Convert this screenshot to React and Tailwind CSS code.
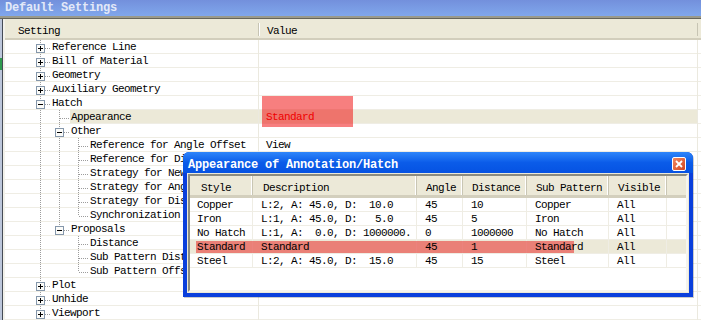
import React from "react";

const MONO = "[font-family:'Liberation_Mono',monospace]";
const T = "text-[11px] tracking-[-0.6px]";
const TB = "text-[12px] tracking-[-0.2px] font-bold";

const rows = [
  { label: "Reference Line", level: 0, box: "plus", anc: [] },
  { label: "Bill of Material", level: 0, box: "plus", anc: [] },
  { label: "Geometry", level: 0, box: "plus", anc: [] },
  { label: "Auxiliary Geometry", level: 0, box: "plus", anc: [] },
  { label: "Hatch", level: 0, box: "minus", anc: [] },
  { label: "Appearance", level: 1, anc: [true], selected: true, value: "Standard", red: true },
  { label: "Other", level: 1, box: "minus", anc: [true] },
  { label: "Reference for Angle Offset", level: 2, anc: [true, true], value: "View" },
  { label: "Reference for Di", level: 2, anc: [true, true] },
  { label: "Strategy for New", level: 2, anc: [true, true] },
  { label: "Strategy for Ang", level: 2, anc: [true, true] },
  { label: "Strategy for Dis", level: 2, anc: [true, true] },
  { label: "Synchronization", level: 2, anc: [true, true], last: true },
  { label: "Proposals", level: 1, box: "minus", anc: [true], last: true },
  { label: "Distance", level: 2, anc: [true, false] },
  { label: "Sub Pattern Dist", level: 2, anc: [true, false] },
  { label: "Sub Pattern Offs", level: 2, anc: [true, false], last: true },
  { label: "Plot", level: 0, box: "plus", anc: [] },
  { label: "Unhide", level: 0, box: "plus", anc: [] },
  { label: "Viewport", level: 0, box: "plus", anc: [] },
];

const DOT = { stroke: "#9c9c9c", strokeDasharray: "1 1" };

function Pass({ on }) {
  return (
    <svg width="19" height="14" className="shrink-0 self-start">
      {on && <line x1="9.5" y1="0" x2="9.5" y2="14" {...DOT} />}
    </svg>
  );
}

function Node({ box, last }) {
  return (
    <svg width="19" height="14" className="shrink-0 self-start">
      <line x1="9.5" y1="0" x2="9.5" y2={last ? 8 : 14} {...DOT} />
      <line x1="10" y1="8.5" x2="19" y2="8.5" {...DOT} />
      {box && (
        <g>
          <rect x="5.5" y="4.5" width="8" height="8" fill="#fbfbf8" stroke="#8597ab" />
          <line x1="7" y1="8.5" x2="12" y2="8.5" stroke="#000" />
          {box === "plus" && <line x1="9.5" y1="6" x2="9.5" y2="11" stroke="#000" />}
        </g>
      )}
    </svg>
  );
}

const cols = [
  { name: "Style", w: "w-[63px]", hp: "pl-[11px]", rp: "pl-[7px]" },
  { name: "Description", w: "w-[164px]", hp: "pl-[10px]", rp: "pl-[8px]" },
  { name: "Angle", w: "w-[46px]", hp: "pl-[9px]", rp: "pl-[8px]" },
  { name: "Distance", w: "w-[64px]", hp: "pl-[9px]", rp: "pl-[8px]" },
  { name: "Sub Pattern", w: "w-[82px]", hp: "pl-[9px]", rp: "pl-[8px]" },
  { name: "Visible", w: "w-[58px]", hp: "pl-[9px]", rp: "pl-[8px]" },
];

const data = [
  ["Copper", "L:2, A: 45.0, D:  10.0", "45", "10", "Copper", "All"],
  ["Iron", "L:1, A: 45.0, D:   5.0", "45", "5", "Iron", "All"],
  ["No Hatch", "L:1, A:  0.0, D: 1000000.", "0", "1000000", "No Hatch", "All"],
  ["Standard", "Standard", "45", "1", "Standard", "All"],
  ["Steel", "L:2, A: 45.0, D:  15.0", "45", "15", "Steel", "All"],
];

function Dialog() {
  return (
    <div className="absolute left-[183px] top-[152px] w-[510px] h-[145px] bg-[#0a3fdc] rounded-t-[6px] flex flex-col px-[4px] pb-[4px] shadow-[1px_1px_0_#00000033]">
      <div className="h-[21px] -mx-[4px] pl-[5px] pr-[7px] rounded-t-[6px] bg-gradient-to-b from-[#2f86fa] via-[#0b5ce9] to-[#0652e2] flex items-center justify-between">
        <span className={`${MONO} ${TB} text-white leading-[14px] pt-[4px] whitespace-nowrap`}>
          Appearance of Annotation/Hatch
        </span>
        <div className="w-[14px] h-[14px] mt-[3px] rounded-[2px] border border-white bg-gradient-to-br from-[#f0875e] to-[#d4431c] flex items-center justify-center">
          <svg width="8" height="8" viewBox="0 0 8 8">
            <path d="M1 1 L7 7 M7 1 L1 7" stroke="#fff" strokeWidth="1.8" />
          </svg>
        </div>
      </div>
      <div className="flex-1 bg-[#ece9d8] p-[1px] flex">
        <div className="flex-1 bg-white border-2 border-t-[#8c8c80] border-l-[#8c8c80] border-b-[#f5f4ee] border-r-[#f5f4ee] flex flex-col">
          <div className="h-[22px] bg-[#ece9d8] border-b-[3px] border-[#d3cfbd] flex">
            {cols.map((c) => (
              <div key={c.name} className={`${c.w} ${c.hp} flex items-center pt-[5px] border-r border-[#c9c6b4] shadow-[inset_-1px_0_0_#fff]`}>
                <span className={`${MONO} ${T} text-black leading-[13px] whitespace-nowrap`}>{c.name}</span>
              </div>
            ))}
            <div className="flex-1" />
          </div>
          {data.map((r, i) => (
            <div key={i} className={`relative h-[14px] flex border-b border-[#efede4] ${i === 3 ? "bg-[#ece9d8]" : ""}`}>
              {i === 3 && <div className="absolute left-[6px] top-[1px] w-[378px] h-[12px] bg-[#e80000]/45" />}
              {r.map((v, j) => (
                <div key={j} className={`${cols[j].w} ${cols[j].rp} pt-[2px] border-r border-[#efede4] flex items-center overflow-hidden`}>
                  <span className={`${MONO} ${T} text-black leading-[13px] whitespace-pre relative`}>{v}</span>
                </div>
              ))}
              <div className="flex-1" />
            </div>
          ))}
          <div className="flex-1" />
        </div>
      </div>
    </div>
  );
}

export default function App() {
  return (
    <div className={`relative w-[701px] h-[323px] overflow-hidden bg-white ${MONO}`}>
      <div className="h-[16px] bg-gradient-to-b from-[#7390dc] to-[#80a7ec] pl-[5px] flex items-center">
        <span className={`${TB} text-[#e3e9f8] leading-[14px] -mt-[1px]`}>Default Settings</span>
      </div>
      <div className="h-[3px] bg-[#9a9a8c] border-b border-[#65655b]" />
      <div className="flex">
        <div className="w-[5px] shrink-0 flex">
          <div className="w-[2px] flex flex-col">
            <div className="h-[39px] bg-[#bcc6da]" />
            <div className="h-[12px] bg-[#2e9a4e]" />
            <div className="flex-1 bg-[#bcc6da]" />
          </div>
          <div className="w-[1px] bg-[#454b56]" />
          <div className="w-[2px] bg-[#f2f1ea]" />
        </div>
        <div className="flex-1 flex flex-col">
          <div className="h-[21px] bg-[#ece9d8] border-b-[2px] border-[#d2cebc] flex">
            <div className="w-[253px] pl-[13px] pt-[5px] flex items-center">
              <span className={`${T} text-black leading-[13px]`}>Setting</span>
            </div>
            <div className="w-px mt-[4px] mb-[2px] bg-[#c7c4b3]" />
            <div className="w-px mt-[4px] mb-[2px] bg-white" />
            <div className="w-[437px] pl-[7px] pt-[5px] flex items-center">
              <span className={`${T} text-black leading-[13px]`}>Value</span>
            </div>
            <div className="w-px mt-[4px] mb-[2px] bg-[#c7c4b3]" />
            <div className="flex-1" />
          </div>
          {rows.map((r, i) => (
            <div key={i} className="flex h-[14px]">
              <div className="w-[253px] shrink-0 flex border-b border-[#efede4]">
                <div className="w-[26px] shrink-0" />
                {r.anc.map((a, k) => (
                  <Pass key={k} on={a} />
                ))}
                <Node box={r.box} last={r.last} />
                <div className={`ml-[1px] pl-[1px] pt-[2px] flex-1 flex items-center ${r.selected ? "bg-[#ece9d8]" : ""}`}>
                  <span className={`${T} leading-[13px] text-black whitespace-nowrap`}>{r.label}</span>
                </div>
              </div>
              <div className="w-px bg-[#ebe9df]" />
              <div className={`w-[438px] shrink-0 pl-[7px] pt-[2px] flex items-center border-b border-[#efede4] ${r.selected ? "bg-[#ece9d8]" : ""}`}>
                <span className={`${T} leading-[13px] ${r.red ? "text-[#ee0000]" : "text-black"}`}>{r.value || ""}</span>
              </div>
              <div className="w-px bg-[#ebe9df]" />
              <div className="flex-1 border-b border-[#efede4]" />
            </div>
          ))}
        </div>
      </div>
      <div className="absolute left-[262px] top-[96px] w-[91px] h-[31px] bg-[#f00000]/50" />
      <Dialog />
    </div>
  );
}
